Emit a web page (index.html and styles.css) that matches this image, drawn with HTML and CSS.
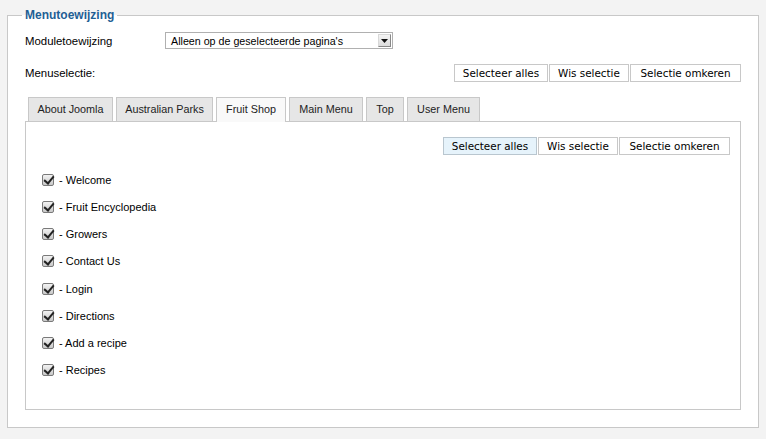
FILE: index.html
```html
<!DOCTYPE html>
<html>
<head>
<meta charset="utf-8">
<link rel="stylesheet" href="styles.css">
</head>
<body>
<fieldset class="box">
  <legend class="legend">Menutoewijzing</legend>
  <div class="row row-assign">
    <label class="label">Moduletoewijzing</label>
    <div class="select">
      <span class="select-text">Alleen op de geselecteerde pagina's</span>
      <span class="select-arrow"><svg width="7" height="4" viewBox="0 0 7 4"><path d="M0 0h7L3.5 4z" fill="#111"/></svg></span>
    </div>
  </div>
  <div class="row row-menu">
    <span class="label">Menuselectie:</span>
    <div class="btns">
      <span class="btn b1">Selecteer alles</span><span class="btn b2">Wis selectie</span><span class="btn b3">Selectie omkeren</span>
    </div>
  </div>
  <div class="tabs">
    <span class="tab t1">About Joomla</span>
    <span class="tab t2">Australian Parks</span>
    <span class="tab t3 active">Fruit Shop</span>
    <span class="tab t4">Main Menu</span>
    <span class="tab t5">Top</span>
    <span class="tab t6">User Menu</span>
  </div>
  <div class="panel">
    <div class="btns inner">
      <span class="btn b1 sel">Selecteer alles</span><span class="btn b2">Wis selectie</span><span class="btn b3">Selectie omkeren</span>
    </div>
    <ul class="items">
      <li class="item"><span class="cb"></span>- Welcome</li>
      <li class="item"><span class="cb"></span>- Fruit Encyclopedia</li>
      <li class="item"><span class="cb"></span>- Growers</li>
      <li class="item"><span class="cb"></span>- Contact Us</li>
      <li class="item"><span class="cb"></span>- Login</li>
      <li class="item"><span class="cb"></span>- Directions</li>
      <li class="item"><span class="cb"></span>- Add a recipe</li>
      <li class="item"><span class="cb"></span>- Recipes</li>
    </ul>
  </div>
</fieldset>
</body>
</html>
```
FILE: styles.css
```css
html, body { margin: 0; padding: 0; }
body {
  background: #f3f3f3;
  font-family: "Liberation Sans", Arial, sans-serif;
  font-size: 12px;
  color: #000;
  padding: 8px 7px 0 7px;
}
.box {
  margin: 0;
  border: 1px solid #c8c8c8;
  background: #fff;
  padding: 4px 17px 17px 17px;
  height: 420px;
  box-sizing: border-box;
}
.legend {
  margin-left: -3px;
  padding: 0 3px;
  color: #1f5f95;
  font-weight: bold;
  font-size: 12px;
  line-height: 14px;
}
.row { display: flex; align-items: center; }
.row-assign { height: 17px; margin-top: 6px; }
.label { width: 140px; font-size: 11.4px; }
.select {
  width: 228px;
  height: 17px;
  box-sizing: border-box;
  border: 1px solid #b0b0b0;
  display: flex;
  align-items: center;
  font-family: "Liberation Sans", sans-serif;
  font-size: 10.7px;
  padding-left: 5px;
}
.select-text { flex: 1; white-space: nowrap; }
.select-arrow {
  width: 13px;
  height: 13px;
  margin-right: 1px;
  box-sizing: border-box;
  border: 1px solid #d8d8d8;
  border-right-color: #888;
  border-bottom-color: #888;
  background: linear-gradient(#f4f4f4, #dcdcdc);
  display: flex;
  align-items: center;
  justify-content: center;
}
.row-menu { justify-content: space-between; margin-top: 15px; height: 18px; }
.btns { display: flex; gap: 1px; }
.btn {
  border: 1px solid #c8c8c8;
  background: #fff;
  height: 18px;
  box-sizing: border-box;
  line-height: 16px;
  padding: 0;
  text-align: center;
  font-family: "DejaVu Sans", sans-serif;
  font-size: 10.4px;
  white-space: nowrap;
}
.b1 { width: 94px; }
.b2 { width: 80px; }
.b3 { width: 111px; }
.btn.sel { background: #e6f3fb; border-color: #b9c6cf; }
.tabs { display: flex; gap: 3px; margin-top: 15px; padding-left: 3px; height: 24px; }
.tab {
  background: #e6e6e6;
  border: 1px solid #c8c8c8;
  border-bottom: none;
  height: 24px;
  box-sizing: border-box;
  text-align: center;
  line-height: 23px;
  font-size: 10.8px;
  color: #222;
  white-space: nowrap;
}
.t1 { width: 85px; }
.t2 { width: 97px; }
.t3 { width: 70px; }
.t4 { width: 74px; }
.t5 { width: 38px; }
.t6 { width: 73px; }
.tab.active { background: #f9f9f9; height: 25px; position: relative; z-index: 1; }
.panel {
  border: 1px solid #c8c8c8;
  height: 289px;
  box-sizing: border-box;
  padding: 15px 10px 0 16px;
}
.inner { justify-content: flex-end; }
.items { list-style: none; margin: 0; padding: 19px 0 0 0; }
.item {
  display: flex;
  align-items: center;
  height: 12px;
  margin-bottom: 15.14px;
  font-size: 11px;
}
.cb {
  width: 12px;
  height: 12px;
  margin-right: 5px;
  box-sizing: border-box;
  border: 1px solid #7a7a7a;
  border-radius: 2px;
  background: linear-gradient(#f2f2f2, #c9c9c9);
  position: relative;
}
.cb::after {
  content: "";
  position: absolute;
  left: 3px;
  top: -1px;
  width: 4px;
  height: 8px;
  border: solid #222;
  border-width: 0 2px 2px 0;
  transform: rotate(40deg);
}
```
